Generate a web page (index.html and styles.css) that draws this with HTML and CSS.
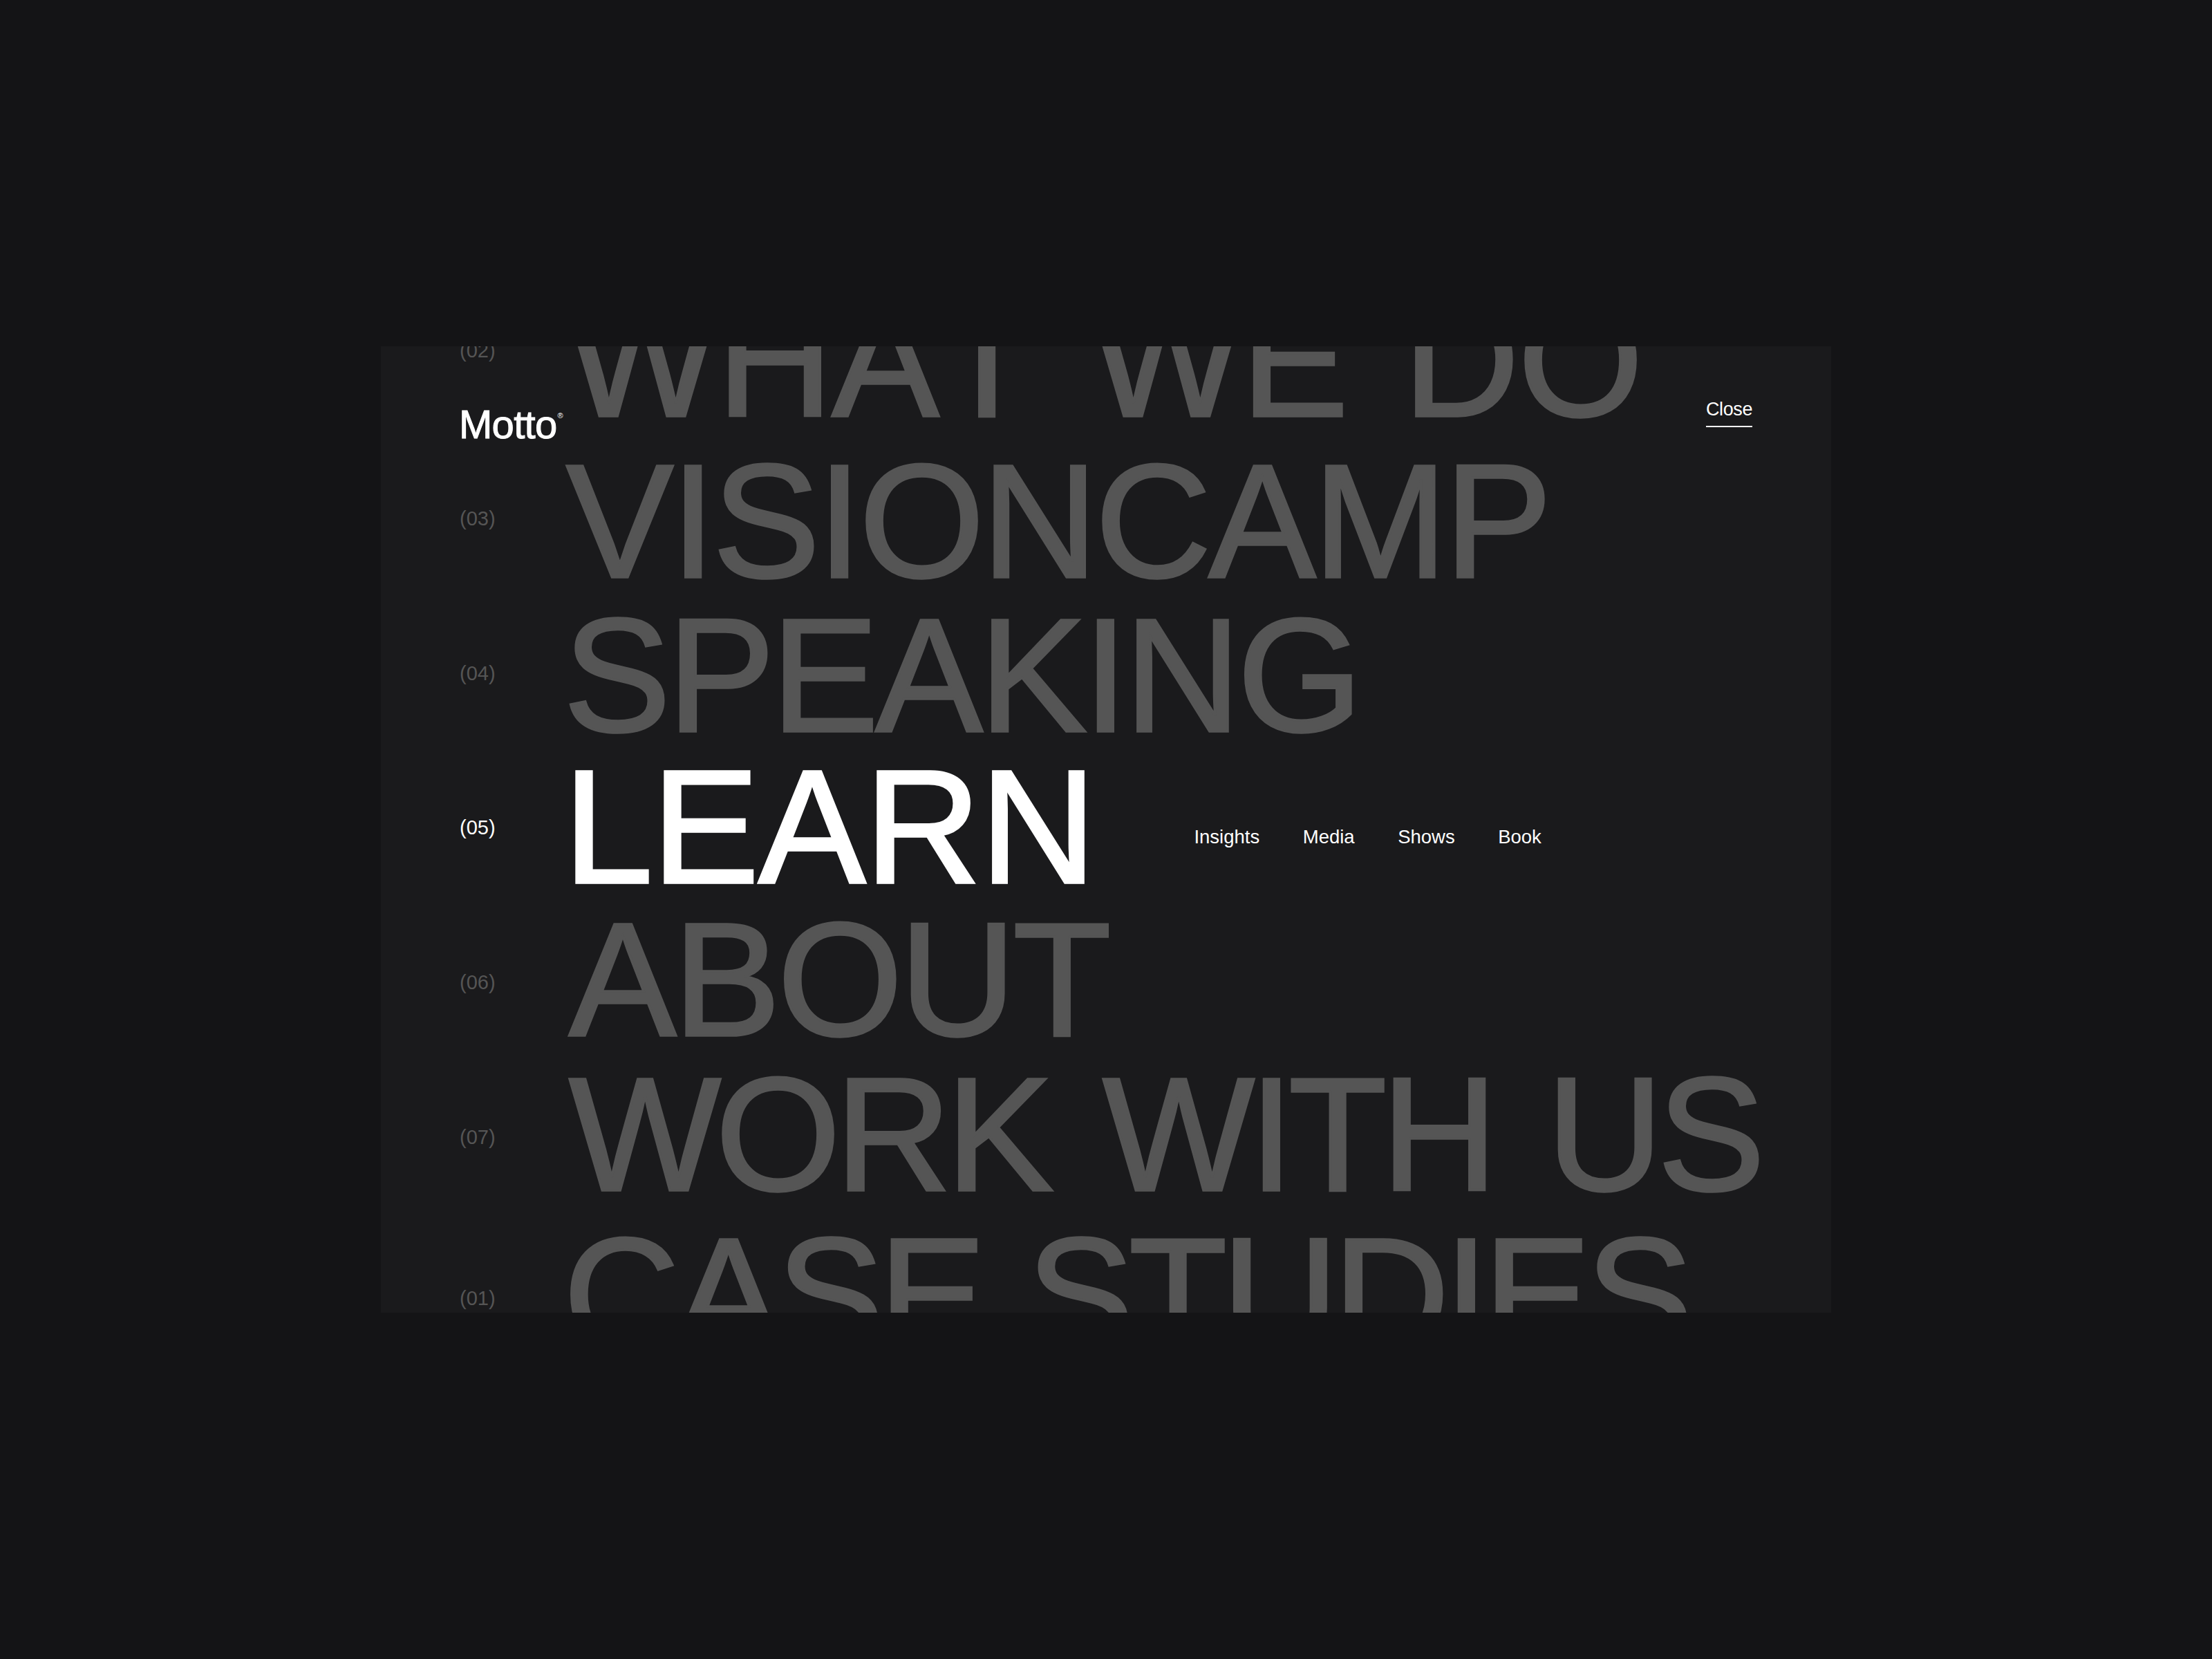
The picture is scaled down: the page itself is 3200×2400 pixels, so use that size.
FILE: index.html
```html
<!DOCTYPE html>
<html lang="en">
<head>
    <meta charset="UTF-8">
    <meta name="viewport" content="width=device-width, initial-scale=1.0">
    <title>Motto</title>
    <link rel="stylesheet" href="styles.css">
</head>
<body>
    <div class="frame">
        <a class="logo" href="#">Motto<span class="logo-mark">&reg;</span></a>
        <a class="close" href="#">Close</a>

        <div class="menu">
            <div class="row row-02">
                <span class="num">(02)</span>
                <a class="title" href="#">WHAT WE DO</a>
            </div>
            <div class="row row-03">
                <span class="num">(03)</span>
                <a class="title" href="#">VISIONCAMP</a>
            </div>
            <div class="row row-04">
                <span class="num">(04)</span>
                <a class="title" href="#">SPEAKING</a>
            </div>
            <div class="row row-05 active">
                <span class="num">(05)</span>
                <a class="title" href="#">LEARN</a>
                <nav class="submenu">
                    <a href="#">Insights</a>
                    <a href="#">Media</a>
                    <a href="#">Shows</a>
                    <a href="#">Book</a>
                </nav>
            </div>
            <div class="row row-06">
                <span class="num">(06)</span>
                <a class="title" href="#">ABOUT</a>
            </div>
            <div class="row row-07">
                <span class="num">(07)</span>
                <a class="title" href="#">WORK WITH US</a>
            </div>
            <div class="row row-01">
                <span class="num">(01)</span>
                <a class="title" href="#">CASE STUDIES</a>
            </div>
        </div>
    </div>
</body>
</html>
```

FILE: styles.css
```css
* {
    box-sizing: border-box;
}

body {
    font-family: 'Liberation Sans', Arial, sans-serif;
    background-color: #141416;
    margin: 0;
    padding: 0;
    height: 100vh;
    display: flex;
    align-items: center;
    justify-content: center;
}

a {
    color: inherit;
    text-decoration: none;
}

.frame {
    position: relative;
    width: 2098px;
    height: 1398px;
    background-color: #1a1a1c;
    overflow: hidden;
    color: #555555;
}

.logo {
    position: absolute;
    top: 78px;
    left: 113px;
    display: flex;
    align-items: flex-start;
    color: white;
    font-size: 58px;
    line-height: 70px;
    letter-spacing: -0.012em;
    -webkit-text-stroke: 1px white;
}

.logo-mark {
    font-size: 11px;
    line-height: 11px;
    letter-spacing: 0;
    margin-top: 17px;
    margin-left: 1px;
    -webkit-text-stroke: 0;
}

.close {
    position: absolute;
    top: 73px;
    right: 114px;
    color: white;
    font-size: 27px;
    line-height: 36px;
    letter-spacing: -0.015em;
    padding-bottom: 6px;
    border-bottom: 2px solid white;
}

.menu {
    margin-top: -92px;
    padding-left: 114px;
}

.row {
    display: flex;
    align-items: center;
    height: 224px;
}

.num {
    width: 150px;
    flex-shrink: 0;
    font-size: 29px;
    line-height: 36px;
}

.title {
    font-size: 233px;
    line-height: 224px;
    -webkit-text-stroke: 3.5px currentColor;
    white-space: nowrap;
}

.row-02 .num { margin-top: -28px; }
.row-02 .title {
    margin-left: 4px;
    font-kerning: none;
    letter-spacing: -2px;
    word-spacing: 18px;
}

.row-03 { margin-top: 9px; }
.row-03 .num { margin-top: -8px; }
.row-03 .title {
    margin-left: 4px;
    letter-spacing: -4.1px;
}

.row-04 { margin-top: -1px; }
.row-04 .num { margin-top: -6px; }
.row-04 .title {
    letter-spacing: -5px;
}

.row-05 { margin-top: -5px; }
.row-05 .num { margin-top: 2px; }
.row-05 .title {
    letter-spacing: -1.5px;
}

.row-06 { margin-top: -3px; }
.row-06 .num { margin-top: 8px; }
.row-06 .title {
    margin-left: 8px;
    letter-spacing: -4.5px;
}

.row-07 .num { margin-top: 8px; }
.row-07 .title {
    margin-left: 8px;
    letter-spacing: -7.9px;
    word-spacing: 22px;
}

.row-01 { margin-top: 8px; }
.row-01 .num { margin-top: 10px; }
.row-01 .title {
    letter-spacing: -7.6px;
    word-spacing: 9px;
}

.active {
    color: white;
}

.submenu {
    display: flex;
    gap: 62.5px;
    margin-left: 143px;
    margin-top: 30px;
    font-size: 27.5px;
    line-height: 36px;
}
```
